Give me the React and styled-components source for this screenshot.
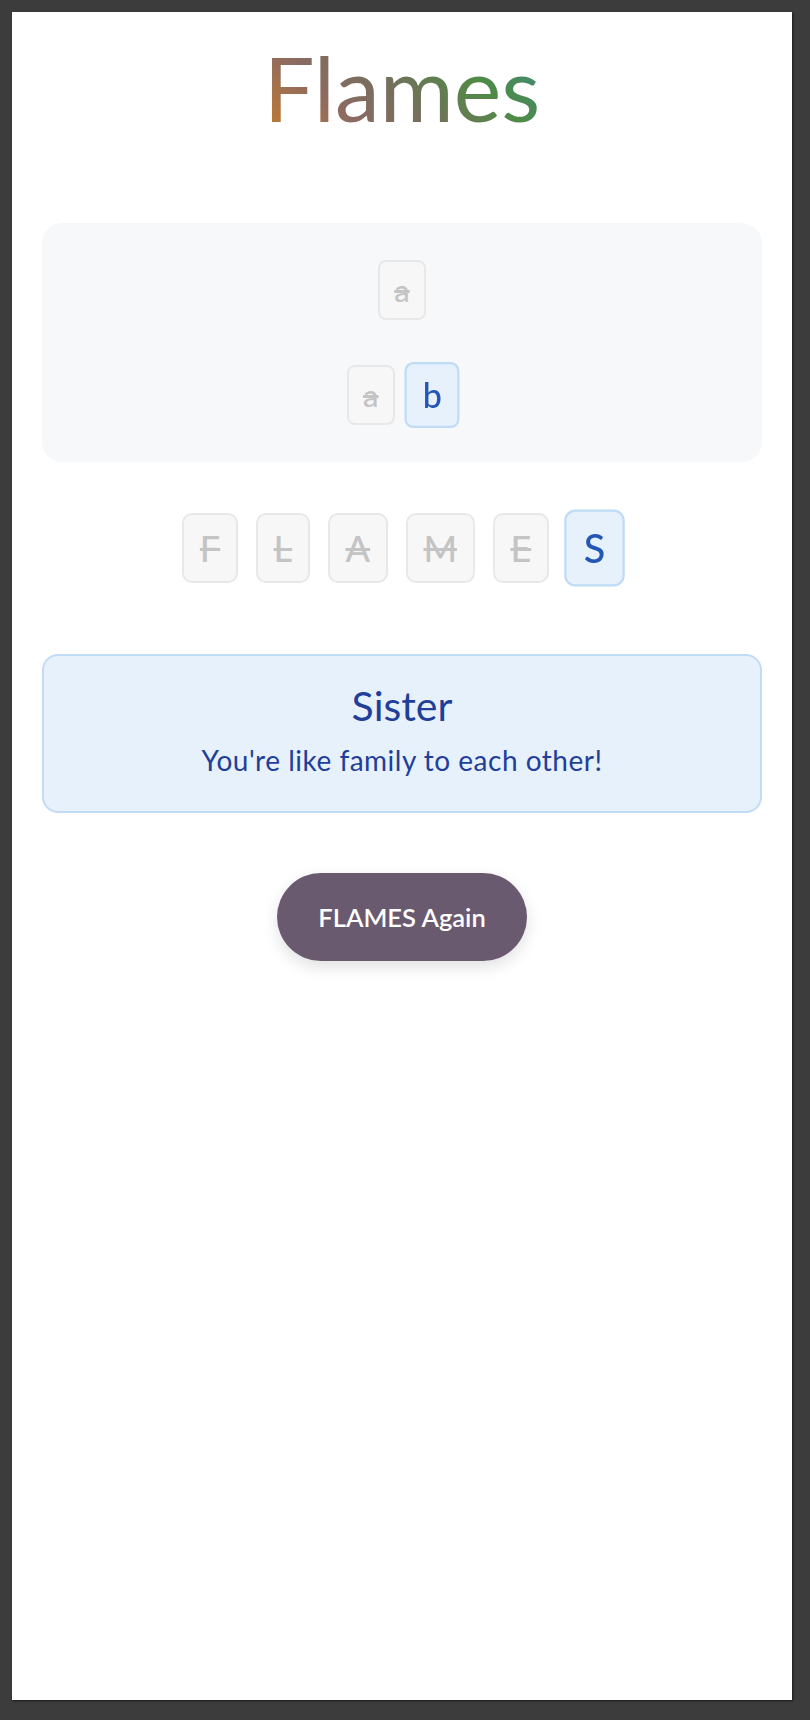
import styled, { createGlobalStyle } from "styled-components";

const GlobalStyle = createGlobalStyle`
  body {
    margin: 0;
    background: #3c3c3c;
    font-family: Lato, "Open Sans", sans-serif;
  }
`;

const Page = styled.div`
  padding: 12px 18px 20px 12px;
`;

const Panel = styled.main`
  background: #fff;
  min-height: 1688px;
  box-sizing: border-box;
  padding: 0 30px;
  box-shadow: 1px 1px 2px rgba(0, 0, 0, 0.6);

  display: flex;
  flex-direction: column;
  align-items: stretch;
`;

const Title = styled.h1`
  margin: 30px 0 0;
  font-size: 90px;
  font-weight: 400;
  line-height: 1;
  text-align: center;
  align-self: center;

  background: linear-gradient(
    45deg,
    #c47a30 0%,
    #8a6a62 28%,
    #74705c 48%,
    #4f8b45 72%,
    #3d8a80 100%
  );
  -webkit-background-clip: text;
  background-clip: text;
  color: transparent;
`;

const Names = styled.section`
  margin-top: 91px;
  background: #f7f8fa;
  border-radius: 20px;
  padding: 37px 0;

  display: flex;
  flex-direction: column;
  gap: 45px;
`;

const Row = styled.div`
  display: flex;
  justify-content: center;
  gap: ${(p) => p.$gap}px;
`;

const Tile = styled.span`
  box-sizing: border-box;
  height: ${(p) => (p.$big ? 70 : 60)}px;
  padding: 0 ${(p) => (p.$big ? 15.7 : 14.5)}px;
  font-size: ${(p) => (p.$big ? 36 : 31)}px;
  font-weight: 500;
  border-radius: ${(p) => (p.$big ? 10 : 8)}px;

  display: flex;
  align-items: center;
  justify-content: center;

  border: 2px solid ${(p) => (p.$hit ? "#c0dbf6" : "#e8e8e8")};
  background: ${(p) => (p.$hit ? "#e6f1fc" : "#f7f7f7")};
  color: ${(p) => (p.$hit ? "#2457b5" : "#c4c4c4")};
  text-decoration: ${(p) => (p.$hit ? "none" : "line-through")};
  transform: ${(p) => (p.$hit ? "scale(1.1)" : "none")};
`;

const Flames = styled(Row)`
  margin-top: 51px;
`;

const Result = styled.section`
  margin-top: 71px;
  height: 159px;
  box-sizing: border-box;
  padding-top: 25px;
  border: 2px solid #c2dcf6;
  border-radius: 16px;
  background: #e7f1fc;
  color: #1f3f98;
  text-align: center;

  display: flex;
  flex-direction: column;
  gap: 14px;
`;

const ResultName = styled.h2`
  margin: 0;
  font-size: 41px;
  font-weight: 400;
  line-height: 1.2;
`;

const ResultText = styled.p`
  margin: 0;
  font-size: 28px;
  letter-spacing: 0.5px;
  line-height: 1.2;
`;

const AgainButton = styled.button`
  margin-top: 60px;
  align-self: center;
  width: 250px;
  height: 88px;
  border: none;
  border-radius: 44px;
  background: #6a5a6f;
  color: #fff;
  font-family: inherit;
  font-size: 25.5px;
  font-weight: 600;
  box-shadow: 0 6px 16px rgba(0, 0, 0, 0.12);
  cursor: pointer;
`;

const name1 = [{ ch: "a", hit: false }];
const name2 = [
  { ch: "a", hit: false },
  { ch: "b", hit: true },
];
const flames = ["F", "L", "A", "M", "E", "S"];

export default function App() {
  return (
    <>
      <GlobalStyle />
      <Page>
        <Panel>
          <Title>Flames</Title>

          <Names>
            <Row $gap={12}>
              {name1.map((l, i) => (
                <Tile key={i} $hit={l.hit}>
                  {l.ch}
                </Tile>
              ))}
            </Row>
            <Row $gap={12}>
              {name2.map((l, i) => (
                <Tile key={i} $hit={l.hit}>
                  {l.ch}
                </Tile>
              ))}
            </Row>
          </Names>

          <Flames $gap={18}>
            {flames.map((l) => (
              <Tile key={l} $big $hit={l === "S"}>
                {l}
              </Tile>
            ))}
          </Flames>

          <Result>
            <ResultName>Sister</ResultName>
            <ResultText>You're like family to each other!</ResultText>
          </Result>

          <AgainButton>FLAMES Again</AgainButton>
        </Panel>
      </Page>
    </>
  );
}
